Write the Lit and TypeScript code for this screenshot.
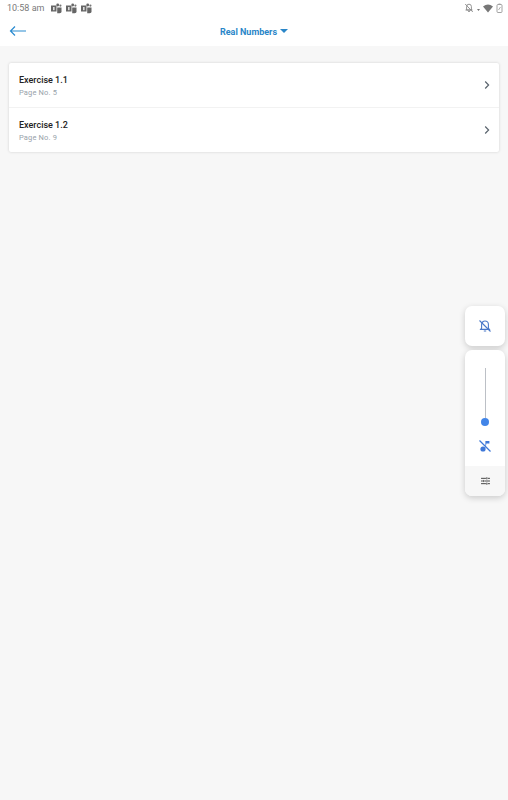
import { LitElement, html, css, svg } from "lit";
import { customElement } from "lit/decorators.js";

const teams = svg`<svg class="teams" width="11" height="11" viewBox="0 0 11 11">
  <rect x="0" y="2.5" width="5.5" height="6" fill="#666"></rect>
  <rect x="2" y="4" width="1.6" height="3.2" fill="#ddd"></rect>
  <circle cx="6.7" cy="2" r="1.4" fill="#666"></circle>
  <circle cx="9.4" cy="2.6" r="1.1" fill="#777"></circle>
  <path d="M6.2 4.4h4.3v3.4a2 2 0 0 1-2 2.4h-2.3z" fill="#666"></path>
</svg>`;

const chevron = svg`<svg width="8" height="10" viewBox="0 0 8 10"><path d="M2.2 1.5l3.4 3.5-3.4 3.5" fill="none" stroke="#5a646e" stroke-width="1.2"></path></svg>`;

@customElement("app-root")
export class AppRoot extends LitElement {
  static styles = css`
    :host {
      display: block;
      position: relative;
      height: 800px;
      background: #f7f7f7;
      font-family: Roboto, "Liberation Sans", sans-serif;
      overflow: hidden;
    }
    .top {
      background: #fff;
      height: 46px;
    }
    .status {
      height: 16px;
      display: flex;
      align-items: center;
      padding: 0 5px 0 7px;
      font-size: 9px;
      color: #7a7a7a;
    }
    .time {
      margin-right: 7px;
    }
    .teams {
      margin-right: 4px;
    }
    .status-right {
      margin-left: auto;
      display: flex;
      align-items: center;
      gap: 3px;
    }
    .bar {
      position: relative;
      height: 30px;
      display: flex;
      align-items: center;
      justify-content: center;
    }
    .back {
      position: absolute;
      left: 9px;
      top: 9px;
    }
    .title {
      color: #2a86c8;
      font-size: 9px;
      font-weight: 700;
      display: flex;
      align-items: center;
      gap: 3px;
      padding-top: 1px;
    }
    .caret {
      width: 0;
      height: 0;
      margin-top: -1px;
      border-left: 4px solid transparent;
      border-right: 4px solid transparent;
      border-top: 4px solid #2a86c8;
    }
    .card {
      margin: 17px 9px 0;
      background: #fff;
      border-radius: 2px;
      box-shadow: 0 0 3px rgba(0, 0, 0, 0.16);
    }
    .row {
      height: 44px;
      display: flex;
      align-items: center;
      justify-content: space-between;
      padding: 0 8px 0 10px;
    }
    .row + .row {
      border-top: 1px solid #f2f2f2;
    }
    .name {
      font-size: 9px;
      font-weight: 500;
      color: #222;
      line-height: 12px;
      padding-top: 1px;
    }
    .page {
      font-size: 7.5px;
      color: #98a2aa;
      line-height: 10px;
      margin-top: 2px;
      letter-spacing: 0.15px;
    }
    .volume {
      position: absolute;
      left: 465px;
      top: 306px;
      width: 40px;
      display: flex;
      flex-direction: column;
      gap: 4px;
    }
    .panel {
      background: #fff;
      border-radius: 7px;
      box-shadow: 0 2px 6px rgba(0, 0, 0, 0.18);
      overflow: hidden;
    }
    .bell {
      height: 40px;
      display: flex;
      align-items: center;
      justify-content: center;
    }
    .slider {
      height: 146px;
      display: flex;
      flex-direction: column;
      align-items: center;
    }
    .track {
      width: 1px;
      height: 50px;
      margin-top: 18px;
      background: #bcc0c6;
    }
    .thumb {
      width: 8px;
      height: 8px;
      border-radius: 50%;
      background: #4285e8;
    }
    .mute {
      margin-top: 13px;
      height: 14px;
    }
    .settings {
      margin-top: auto;
      width: 100%;
      height: 30px;
      background: #f7f7f7;
      display: flex;
      align-items: center;
      justify-content: center;
    }
  `;

  render() {
    const rows = [
      { name: "Exercise 1.1", page: "Page No. 5" },
      { name: "Exercise 1.2", page: "Page No. 9" },
    ];
    return html`
      <div class="top">
        <div class="status">
          <span class="time">10:58 am</span>
          ${teams}${teams}${teams}
          <div class="status-right">
            <svg width="10" height="10" viewBox="0 0 10 10">
              <path d="M5 1.2a2.4 2.4 0 0 1 2.4 2.4V7H2.6V3.6A2.4 2.4 0 0 1 5 1.2zM1.5 7h7M4 8.4h2" fill="none" stroke="#888" stroke-width="0.9"></path>
              <path d="M1.2 1l7.6 8" stroke="#888" stroke-width="0.9"></path>
            </svg>
            <svg width="3" height="10" viewBox="0 0 3 10"><path d="M0 6h3L1.5 8z" fill="#777"></path></svg>
            <svg width="10" height="10" viewBox="0 0 10 10"><path d="M0 3.5Q5 -0.5 10 3.5L5 9.5z" fill="#777"></path></svg>
            <svg width="7" height="10" viewBox="0 0 7 10"><rect x="1" y="1.5" width="5" height="8" rx="1" fill="none" stroke="#999" stroke-width="0.9"></rect><path d="M2.5 1h2M2.5 7l2-3" stroke="#999" stroke-width="0.8"></path></svg>
          </div>
        </div>
        <div class="bar">
          <svg class="back" width="17" height="12" viewBox="0 0 17 12">
            <path d="M17 6H1.5M6 1.5L1.5 6 6 10.5" fill="none" stroke="#2a8bd0" stroke-width="1.2"></path>
          </svg>
          <div class="title">Real Numbers <span class="caret"></span></div>
        </div>
      </div>
      <div class="card">
        ${rows.map(
          (r) => html`<div class="row">
            <div>
              <div class="name">${r.name}</div>
              <div class="page">${r.page}</div>
            </div>
            ${chevron}
          </div>`
        )}
      </div>
      <div class="volume">
        <div class="panel bell">
          <svg width="14" height="14" viewBox="0 0 14 14">
            <path d="M7 2a3.4 3.4 0 0 1 3.4 3.4V9l1 1.4H2.6L3.6 9V5.4A3.4 3.4 0 0 1 7 2zM5.8 12h2.4" fill="none" stroke="#4a78c8" stroke-width="1.1"></path>
            <path d="M1.5 1.5l11 11" stroke="#4a78c8" stroke-width="1.1"></path>
          </svg>
        </div>
        <div class="panel slider">
          <div class="track"></div>
          <div class="thumb"></div>
          <svg class="mute" width="14" height="14" viewBox="0 0 14 14">
            <circle cx="5" cy="10" r="2.6" fill="#3f78d8"></circle>
            <path d="M7.4 10V2h4v2.6H8.4" fill="#3f78d8"></path>
            <path d="M1.5 1.5l11 11" stroke="#3f78d8" stroke-width="1.2"></path>
          </svg>
          <div class="settings">
            <svg width="9" height="8" viewBox="0 0 10 9">
              <path d="M0 1.5h5.5M7.5 1.5H10M0 4.5H2M4 4.5h6M0 7.5h5.5M7.5 7.5H10M6.5 .3v2.4M3 3.3v2.4M6.5 6.3v2.4" fill="none" stroke="#444" stroke-width="1.1"></path>
            </svg>
          </div>
        </div>
      </div>
    `;
  }
}
